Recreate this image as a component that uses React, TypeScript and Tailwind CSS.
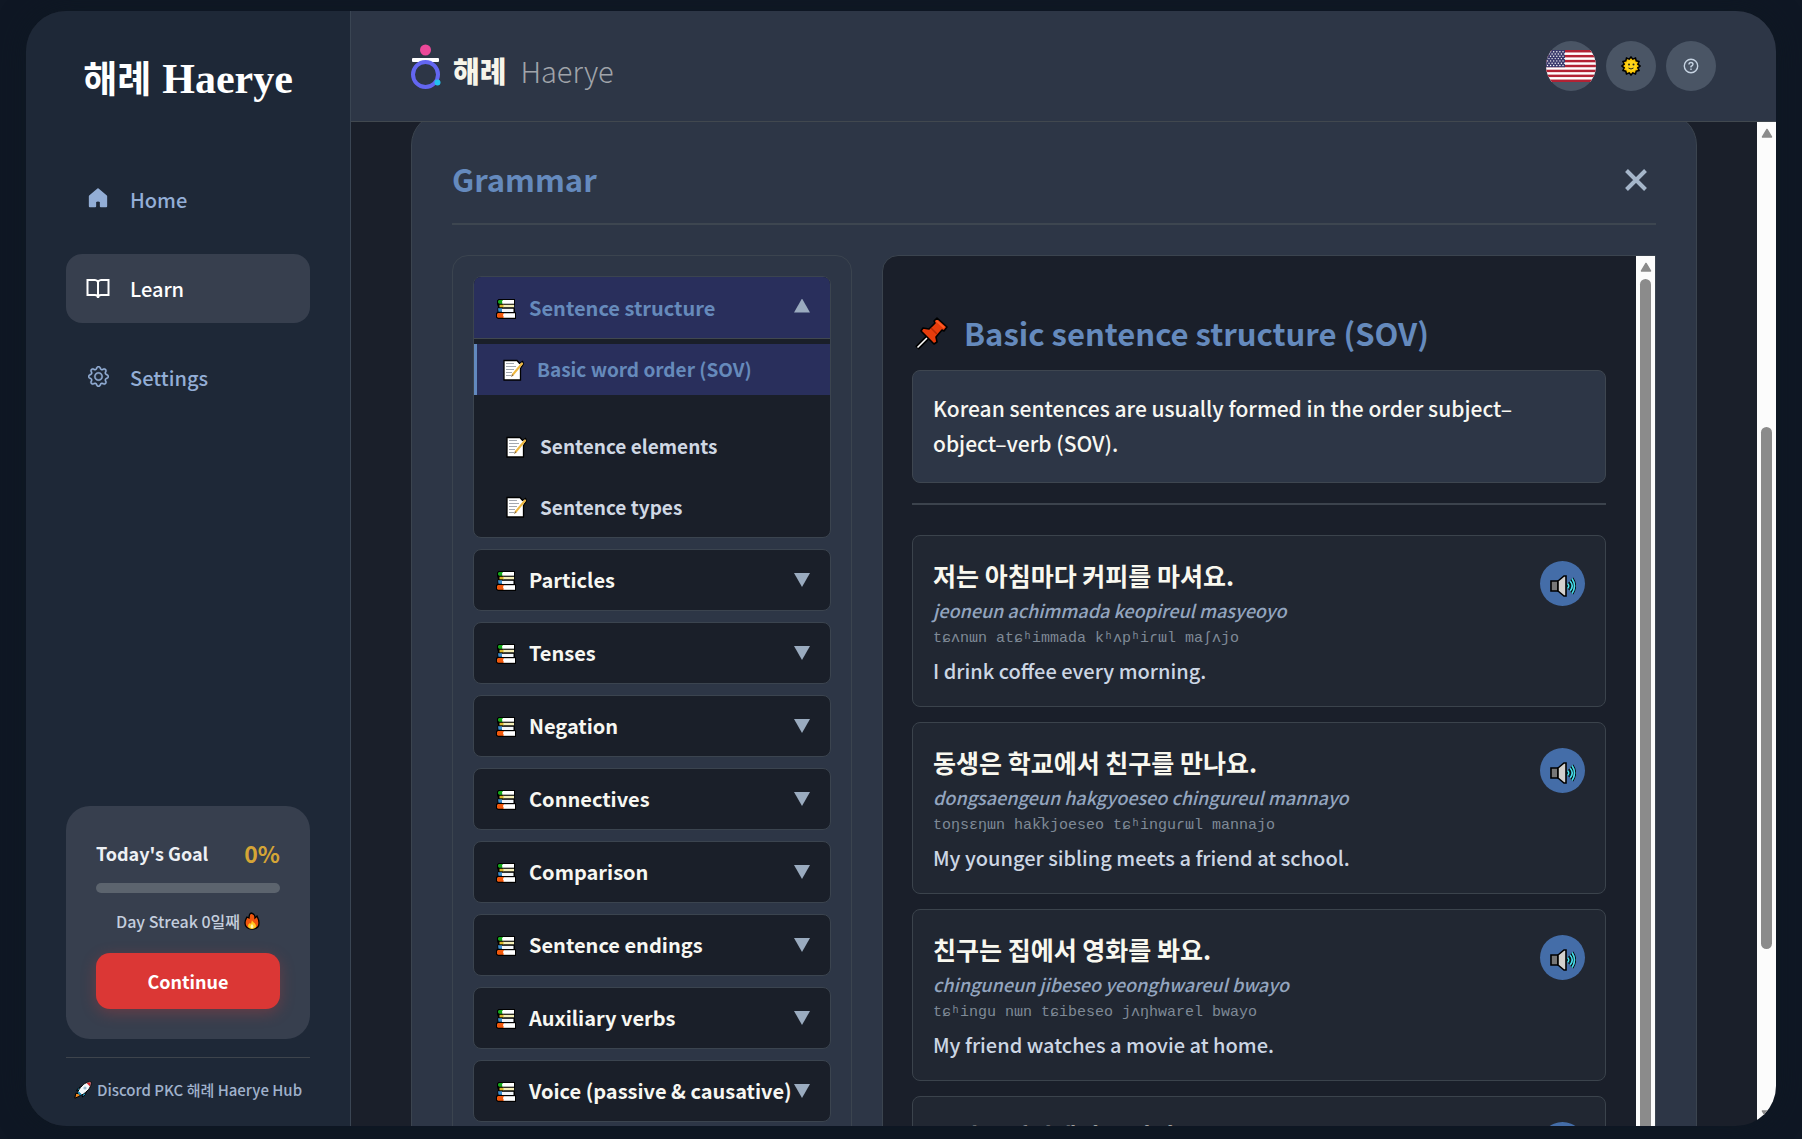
import React from "react";

const ui = "font-['Noto_Sans_CJK_KR',sans-serif]";

function Books() {
  return (
    <svg viewBox="0 0 20 20" className="mt-[2px] h-5 w-5 shrink-0" aria-hidden="true">
      <path d="M2.500 0H19v6h-.5v3.500h.5V13l1 .5V20H2l-2-1.500V14l1.500-1V9L2 8 1 5V1.500z" fill="#000" />
      <path d="M6 1h12v3.700H6z" fill="#fff" />
      <path d="M3 1h4l-1 1.500.5 2.200H3L2 3.500V2z" fill="#16a81b" />
      <path d="M7 5.800h11v2.500H7z" fill="#f4eeb8" />
      <path d="M3.500 5.800h4v2.500h-4z" fill="#d9b52a" />
      <path d="M6 9.800h11.500v3.200H6z" fill="#f3f6fa" />
      <path d="M2 9.300h4v3.500H2.500z" fill="#3c8fd0" />
      <path d="M7 14.200h12v4.600H7z" fill="#fff" />
      <path d="M2 13.900h6L7 16l1 2.800H2.200L1 18v-3z" fill="#f2590c" />
    </svg>
  );
}

function Memo() {
  return (
    <svg viewBox="0 0 22 22" className="h-[22px] w-[22px] shrink-0" aria-hidden="true">
      <path d="M2 1.500h13l2.500 3 3-2 1 2-3 5V21H2z" fill="#fff" stroke="#000" strokeWidth="1.300" />
      <path d="M4 4.500h8M4 7.500h10M4 10.500h8M4 13.500h6M4 16.500h5" stroke="#a3a8b0" strokeWidth="1" />
      <path d="M20.500 4 10.500 16" stroke="#efb83f" strokeWidth="2" />
      <path d="m9 18 1-3 1.500 1.500z" fill="#8a6a38" />
    </svg>
  );
}

function Pin() {
  return (
    <svg viewBox="0 0 34 34" className="h-[34px] w-[34px] shrink-0" aria-hidden="true">
      <path d="M2 32 16 18" stroke="#000" strokeWidth="5" />
      <path d="M2.500 31.500 16 18" stroke="#fff" strokeWidth="1.600" />
      <path d="m22 2 10 9-3 4-2-1-6 7 1 5-3 2L6 15l2-3 6 1 6-6-1-2z" fill="#e63c0c" stroke="#000" strokeWidth="1.600" strokeLinejoin="round" />
      <path d="m22 4 8 7-1.500 1.500L20.500 5z" fill="#ff5a24" />
      <path d="m16 12 6 6" stroke="#b92a04" strokeWidth="1.500" />
    </svg>
  );
}

function Speaker() {
  return (
    <svg viewBox="0 0 26 22" className="mt-1 h-[22px] w-[26px]" aria-hidden="true">
      <path d="M1 6h7v10H1z" fill="#777" stroke="#000" strokeWidth="1.600" />
      <path d="M8 6l6-5h2v20h-2l-6-5z" fill="#d3d1ce" stroke="#000" strokeWidth="1.600" />
      <path d="M17.500 8.500q2.500 2.500 0 5M20 6q4.500 5 0 10M22 3.500q5 7.500 0 15" fill="none" stroke="#000" strokeWidth="3.200" />
      <path d="M17.500 8.500q2.500 2.500 0 5M20 6q4.500 5 0 10M22 3.500q5 7.500 0 15" fill="none" stroke="#45dcea" strokeWidth="1.700" />
    </svg>
  );
}

function Fire() {
  return (
    <svg viewBox="0 0 16 18" className="h-[18px] w-4 shrink-0" aria-hidden="true">
      <path d="M7 1c4 1 4 3 4 5l2-2c1 2 2 4 2 7 0 4-3 6-7 6s-7-2-7-6c0-3 1-4 2-6l2 1c0-2 0-4 2-5z" fill="#f0560e" stroke="#000" strokeWidth="1.300" />
      <path d="M8 8c0 2 4 3 4 6 0 2-2 3-4 3s-4-1-4-3 1-2 2-3l1 1z" fill="#ffc91f" />
      <path d="M8 12c2 2 2 4 0 4.500-2-.5-2-2.500 0-4.500z" fill="#fff3b0" />
    </svg>
  );
}

function Rocket() {
  return (
    <svg viewBox="0 0 18 18" className="h-[18px] w-[18px] shrink-0" aria-hidden="true">
      <path d="m.8 17.200 1-5L6 13l0 2z" fill="#f58a1f" stroke="#000" />
      <path d="M5 10 2.500 9.500 5 6.500l3-.5zM8 13l.5 3 3-2.500.5-3z" fill="#25b5e8" stroke="#000" />
      <path d="M17.200.8c0 5-2 8-7.700 12.200l-2 1L4 10.500l1-2C9 3 12 .8 17.200.8z" fill="#f4f8fb" stroke="#000" />
      <path d="M16.700 1.300 12.500 2 16 5.500z" fill="#d8272c" />
      <circle cx="11" cy="7" r="1.600" fill="#9ab9cc" />
      <path d="m4.800 10.500 2.700 2.700-1.500 1L3.800 12z" fill="#1c9fd2" />
    </svg>
  );
}

function Sun() {
  return (
    <svg viewBox="0 0 20 20" className="h-5 w-5" aria-hidden="true">
      <path d="M10 1l1.800 2.200L14.500 2l.7 2.800 2.800.7-1.200 2.700L19 10l-2.200 1.800 1.200 2.700-2.800.7-.7 2.800-2.700-1.200L10 19l-1.800-2.200L5.500 18l-.7-2.800L2 14.500l1.200-2.700L1 10l2.200-1.800L2 5.500l2.800-.7L5.500 2l2.700 1.200z" fill="#fdc500" stroke="#000" strokeWidth="1.500" />
      <circle cx="10" cy="10" r="5.500" fill="#ffd51a" />
      <circle cx="8" cy="8.500" r="1" fill="#222" />
      <circle cx="12.500" cy="8.500" r="1" fill="#222" />
      <path d="M7.500 12q2.500 2 5 0" fill="none" stroke="#222" />
    </svg>
  );
}

function Flag() {
  const stripes = [0, 2, 4, 6, 8, 10, 12];
  const rows = [0, 1, 2, 3, 4, 5, 6];
  const cols = [0, 1, 2, 3, 4, 5];
  return (
    <svg viewBox="0 0 50 32" className="h-8 w-[50px]" aria-hidden="true">
      <rect width="50" height="32" fill="#fff" />
      {stripes.map((s) => (
        <rect key={s} y={(s * 32) / 13} width="50" height={32 / 13} fill="#b22234" />
      ))}
      <rect width="19" height="17.200" fill="#3c3b6e" />
      {rows.map((r) =>
        cols.map((c) => (
          <circle key={r + "-" + c} cx={1.500 + c * 3.100 + (r % 2) * 1.500} cy={1.700 + r * 2.300} r="0.700" fill="#fff" />
        ))
      )}
    </svg>
  );
}

function Mark() {
  return (
    <svg viewBox="0 0 30 46" className="mt-[2px] h-[46px] w-[30px] shrink-0" aria-hidden="true">
      <circle cx="14.500" cy="6" r="5.500" fill="#ec4899" />
      <rect x="1" y="14" width="27" height="4" rx="1" fill="#fff" />
      <circle cx="14.500" cy="30.500" r="12.500" fill="none" stroke="#6366f1" strokeWidth="4" />
      <circle cx="26.500" cy="38.500" r="3" fill="#22c3ee" />
    </svg>
  );
}

function HomeIcon() {
  return (
    <svg viewBox="0 0 24 24" className="mb-1 h-[22px] w-[22px] shrink-0" aria-hidden="true">
      <path d="M12 2.500 3 10v11h6v-5q3-2.500 6 0v5h6V10z" fill="currentColor" stroke="currentColor" strokeWidth="2" strokeLinejoin="round" />
    </svg>
  );
}

function BookIcon() {
  return (
    <svg viewBox="0 0 24 24" className="h-6 w-6 shrink-0" fill="none" stroke="currentColor" strokeWidth="2" aria-hidden="true">
      <path d="M12 5q-1-2-3-2H1.500v15H9q3 0 3 3 0-3 3-3h7.500V3H15q-2 0-3 2v16" />
    </svg>
  );
}

function GearIcon() {
  return (
    <svg viewBox="0 0 16 16" className="mb-[2px] h-[21px] w-[21px] shrink-0" fill="currentColor" stroke="currentColor" strokeWidth="0.300" aria-hidden="true">
      <path d="M8 4.754a3.246 3.246 0 1 0 0 6.492 3.246 3.246 0 0 0 0-6.492M5.754 8a2.246 2.246 0 1 1 4.492 0 2.246 2.246 0 0 1-4.492 0" />
      <path d="M9.796 1.343c-.527-1.790-3.065-1.790-3.592 0l-.094.319a.873.873 0 0 1-1.255.520l-.292-.160c-1.640-.892-3.433.902-2.540 2.541l.159.292a.873.873 0 0 1-.520 1.255l-.319.094c-1.790.527-1.790 3.065 0 3.592l.319.094a.873.873 0 0 1 .520 1.255l-.160.292c-.892 1.640.901 3.434 2.541 2.540l.292-.159a.873.873 0 0 1 1.255.520l.094.319c.527 1.790 3.065 1.790 3.592 0l.094-.319a.873.873 0 0 1 1.255-.520l.292.160c1.640.893 3.434-.902 2.540-2.541l-.159-.292a.873.873 0 0 1 .520-1.255l.319-.094c1.790-.527 1.790-3.065 0-3.592l-.319-.094a.873.873 0 0 1-.520-1.255l.160-.292c.893-1.640-.902-3.433-2.541-2.540l-.292.159a.873.873 0 0 1-1.255-.520zm-2.633.283c.246-.835 1.428-.835 1.674 0l.094.319a1.873 1.873 0 0 0 2.693 1.115l.291-.160c.764-.415 1.600.420 1.184 1.185l-.159.292a1.873 1.873 0 0 0 1.116 2.692l.318.094c.835.246.835 1.428 0 1.674l-.319.094a1.873 1.873 0 0 0-1.115 2.693l.160.291c.415.764-.420 1.600-1.185 1.184l-.291-.159a1.873 1.873 0 0 0-2.693 1.116l-.094.318c-.246.835-1.428.835-1.674 0l-.094-.319a1.873 1.873 0 0 0-2.692-1.115l-.292.160c-.764.415-1.600-.420-1.184-1.185l.159-.291A1.873 1.873 0 0 0 1.945 8.930l-.319-.094c-.835-.246-.835-1.428 0-1.674l.319-.094A1.873 1.873 0 0 0 3.060 4.377l-.160-.292c-.415-.764.420-1.600 1.185-1.184l.292.159a1.873 1.873 0 0 0 2.692-1.115z" />
    </svg>
  );
}

const nav = [
  { label: "Home", icon: <HomeIcon />, active: false },
  { label: "Learn", icon: <BookIcon />, active: true },
  { label: "Settings", icon: <GearIcon />, active: false },
];

const groups = [
  "Particles",
  "Tenses",
  "Negation",
  "Connectives",
  "Comparison",
  "Sentence endings",
  "Auxiliary verbs",
  "Voice (passive & causative)",
];

const examples = [
  {
    ko: "저는 아침마다 커피를 마셔요.",
    rom: "jeoneun achimmada keopireul masyeoyo",
    ipa: "tɕʌnɯn atɕʰimmada kʰʌpʰiɾɯl maʃʌjo",
    en: "I drink coffee every morning.",
  },
  {
    ko: "동생은 학교에서 친구를 만나요.",
    rom: "dongsaengeun hakgyoeseo chingureul mannayo",
    ipa: "toŋsɛŋɯn hak̚kjoeseo tɕʰinguɾɯl mannajo",
    en: "My younger sibling meets a friend at school.",
  },
  {
    ko: "친구는 집에서 영화를 봐요.",
    rom: "chinguneun jibeseo yeonghwareul bwayo",
    ipa: "tɕʰingu nɯn tɕibeseo jʌŋhwarel bwayo",
    en: "My friend watches a movie at home.",
  },
  {
    ko: "우리는 바다에서 즐거워요.",
    rom: "",
    ipa: "",
    en: "",
  },
];

function Arrow({ down = false }: { down?: boolean }) {
  return (
    <svg viewBox="0 0 12 10" className="h-[10px] w-3 shrink-0" aria-hidden="true">
      <path d={down ? "M1.500 1h9L6 8.500z" : "M1.500 9h9L6 1.500z"} fill="#8b8b8b" stroke="#8b8b8b" strokeWidth="1.500" strokeLinejoin="round" />
    </svg>
  );
}

function Sidebar() {
  return (
    <aside className="flex w-[325px] shrink-0 flex-col border-r border-[#3a4553] bg-[#1e2837] px-10 pb-6">
      <h1 className="mt-9 flex items-baseline justify-center gap-[11px] font-['Liberation_Serif','Noto_Sans_CJK_KR',serif] text-[42px] leading-[64px] font-bold whitespace-nowrap text-white">
        <span className="text-[37px]">해례</span>
        <span>Haerye</span>
      </h1>
      <nav className="mt-[52px] flex flex-col gap-5">
        {nav.map((n) => (
          <a
            key={n.label}
            href="#"
            className={
              n.active
                ? "flex h-[69px] items-center gap-5 rounded-2xl bg-[#373f4e] px-5 text-[20px] font-medium text-white"
                : "flex h-[69px] items-center gap-5 rounded-2xl px-5 text-[20px] font-medium text-[#93aed6]"
            }
          >
            <span className="flex w-6 justify-center">{n.icon}</span>
            {n.label}
          </a>
        ))}
      </nav>
      <section className="mt-auto rounded-3xl bg-[#373f4e] p-[30px]">
        <div className="flex h-[34px] items-center justify-between">
          <h2 className="text-[18px] font-bold text-[#edf0f4]">Today's Goal</h2>
          <span className="text-[23px] font-bold text-[#d5a536]">0%</span>
        </div>
        <div className="mt-[13px] h-[10px] rounded-full bg-[#5c646e]" />
        <p className="mt-4 flex items-center justify-center gap-1 text-[16px] leading-6 font-medium text-[#c4cedd]">
          Day Streak 0일째 <Fire />
        </p>
        <button className="mt-5 h-14 w-full rounded-[14px] bg-[#db3735] text-[18px] font-bold text-white shadow-[0_4px_15px_rgba(219,55,53,0.3)]">
          Continue
        </button>
      </section>
      <a href="#" className="mt-[18px] flex items-center justify-center gap-[5px] border-t border-[#3e444c] pt-5 text-[15px] leading-6 font-medium whitespace-nowrap text-[#a0b2cc]">
        <Rocket /> Discord PKC 해례 Haerye Hub
      </a>
    </aside>
  );
}

function Header() {
  return (
    <header className="flex h-[111px] shrink-0 items-center justify-between border-b border-[#41484f] bg-[#2d3646] px-[60px]">
      <div className="flex items-center gap-3">
        <Mark />
        <div className="flex items-center gap-[14px] pt-2 leading-none">
          <span className="text-[29px] font-black text-[#f7f5ea]">해례</span>
          <span className="text-[29px] font-light text-[#a0a4aa]">Haerye</span>
        </div>
      </div>
      <div className="flex gap-[10px]">
        <button aria-label="Language" className="flex h-[50px] w-[50px] items-center justify-center overflow-hidden rounded-full bg-[#4a5565]">
          <Flag />
        </button>
        <button aria-label="Theme" className="flex h-[50px] w-[50px] items-center justify-center rounded-full bg-[#4a5565]">
          <Sun />
        </button>
        <button aria-label="Help" className="flex h-[50px] w-[50px] items-center justify-center rounded-full bg-[#4a5565] text-[#c6d3e2]">
          <svg viewBox="0 0 16 16" className="h-4 w-4" fill="none" stroke="currentColor" strokeWidth="1.400" aria-hidden="true">
            <circle cx="8" cy="8" r="6.700" />
            <path d="M6 6.500q0-2 2-2t2 1.800Q10 7.500 8 8.500v1" />
            <path d="M8 10.600v1.400" />
          </svg>
        </button>
      </div>
    </header>
  );
}

function Topics() {
  return (
    <div className="flex w-[400px] shrink-0 flex-col gap-[11px] rounded-2xl border border-[#3b444f] p-5">
      <div className="overflow-hidden rounded-lg border border-[#3b444f] bg-[#1a1f29]">
        <button className="flex h-[62px] w-full items-center border-b border-[#41484f] bg-[#292f5c] px-[22px] text-[20px] font-bold text-[#668abb]">
          <Books />
          <span className="ml-[13px] flex-1 text-left">Sentence structure</span>
          <span className="-mr-[2px] mb-1 h-[14px] w-4 shrink-0 bg-[#9aabbf] [clip-path:polygon(50%_0,100%_100%,0_100%)]" />
        </button>
        <ul className="pt-[5px] text-[19px] text-[#d0d8e4]">
          <li>
            <button className="flex h-[51px] w-full items-center gap-[13px] border-l-[3px] border-[#6289be] bg-[#292f5c] px-[25px] font-bold text-[#668abb]">
              <Memo /> Basic word order (SOV)
            </button>
          </li>
          <li className="mt-[21px]">
            <button className="flex h-[61px] w-full items-center gap-[13px] px-[31px] font-bold">
              <Memo /> Sentence elements
            </button>
          </li>
          <li>
            <button className="flex h-[60px] w-full items-center gap-[13px] px-[31px] font-bold">
              <Memo /> Sentence types
            </button>
          </li>
        </ul>
      </div>
      {groups.map((g) => (
        <button key={g} className="flex h-[62px] w-full shrink-0 items-center rounded-lg border border-[#3b444f] bg-[#1a1f29] px-[22px] text-[20px] font-bold text-[#f7f7f2]">
          <Books />
          <span className="ml-[13px] flex-1 text-left whitespace-nowrap">{g}</span>
          <span className="-mr-[2px] h-[14px] w-4 shrink-0 bg-[#9aabbf] [clip-path:polygon(0_0,100%_0,50%_100%)]" />
        </button>
      ))}
    </div>
  );
}

function Lesson() {
  return (
    <div className="flex min-w-0 flex-1 overflow-hidden rounded-tl-2xl border border-[#3b444f] bg-[#1a1f2a]">
      <article className="min-w-0 flex-1 pt-12 pr-[30px] pl-[29px]">
        <h3 className="flex h-[58px] items-center gap-[15px] pl-[3px] text-[31px] font-bold text-[#658abd]">
          <Pin /> Basic sentence structure (SOV)
        </h3>
        <p className="mt-2 rounded-lg border border-[#3e4650] bg-[#2d3646] px-5 pt-5 pb-[21px] text-[21px] leading-[35px] font-medium text-[#f7f7f2]">
          Korean sentences are usually formed in the order subject–object–verb (SOV).
        </p>
        <hr className="mt-5 mb-[30px] border-t-2 border-[#3c434d]" />
        <div className="flex flex-col gap-[15px]">
          {examples.map((e) => (
            <div key={e.ko} className="flex h-[172px] items-start justify-between rounded-lg border border-[#3b434c] bg-[#212732] px-5 pt-[19px]">
              <div>
                <p className="text-[25px] leading-10 font-bold text-[#f9f8ef]">{e.ko}</p>
                <p className="text-[18px] leading-[30px] font-medium text-[#93a5bf] italic">{e.rom}</p>
                <p className="font-['Liberation_Mono','DejaVu_Sans_Mono',monospace] text-[15px] leading-7 text-[#7f8a97]">{e.ipa}</p>
                <p className="text-[20px] leading-9 font-medium text-[#ccd6e4]">{e.en}</p>
              </div>
              <button aria-label="Play audio" className="mt-[6px] flex h-[45px] w-[45px] shrink-0 items-center justify-center rounded-full bg-[#446da8]">
                <Speaker />
              </button>
            </div>
          ))}
        </div>
      </article>
      <div className="flex w-[19px] shrink-0 flex-col items-center bg-[#fcfcfc] pt-[6px]">
        <Arrow />
        <div className="mt-[7px] w-[11px] flex-1 rounded-t-full bg-[#8b8b8b]" />
      </div>
    </div>
  );
}

export default function App() {
  return (
    <div className={ui + " h-screen overflow-hidden bg-[#0f1724] px-[26px] pt-[11px] pb-[13px]"}>
      <div className="flex h-full overflow-hidden rounded-[40px] bg-[#1a1f2a] shadow-[0_0_30px_rgba(14,24,34,0.9)]">
        <Sidebar />
        <div className="flex min-w-0 flex-1 flex-col">
          <Header />
          <div className="flex min-h-0 flex-1">
            <main className="min-w-0 flex-1 overflow-hidden px-[60px]">
              <section className="-mt-[9px] rounded-[32px] border border-[#3b444f] bg-[#2d3646] px-10">
                <div className="flex h-[111px] items-center justify-between border-b-2 border-[#3d4650] pt-[23px]">
                  <h2 className="pb-1 text-[31px] leading-none font-bold text-[#658abd]">Grammar</h2>
                  <button aria-label="Close" className="flex h-10 w-10 items-center justify-center text-[#a5b6ca]">
                    <svg viewBox="0 0 24 24" className="h-6 w-6" stroke="currentColor" strokeWidth="4" aria-hidden="true">
                      <path d="m2.500 2.500 19 19M21.500 2.500l-19 19" />
                    </svg>
                  </button>
                </div>
                <div className="mt-[30px] flex gap-[30px] pb-10">
                  <Topics />
                  <Lesson />
                </div>
              </section>
            </main>
            <div className="flex w-[19px] shrink-0 flex-col items-center bg-[#fcfcfc] py-[6px]">
              <Arrow />
              <div className="flex w-[11px] flex-1 flex-col">
                <div className="flex-[289]" />
                <div className="flex-[522] rounded-full bg-[#8b8b8b]" />
                <div className="flex-[161]" />
              </div>
              <Arrow down />
            </div>
          </div>
        </div>
      </div>
    </div>
  );
}
